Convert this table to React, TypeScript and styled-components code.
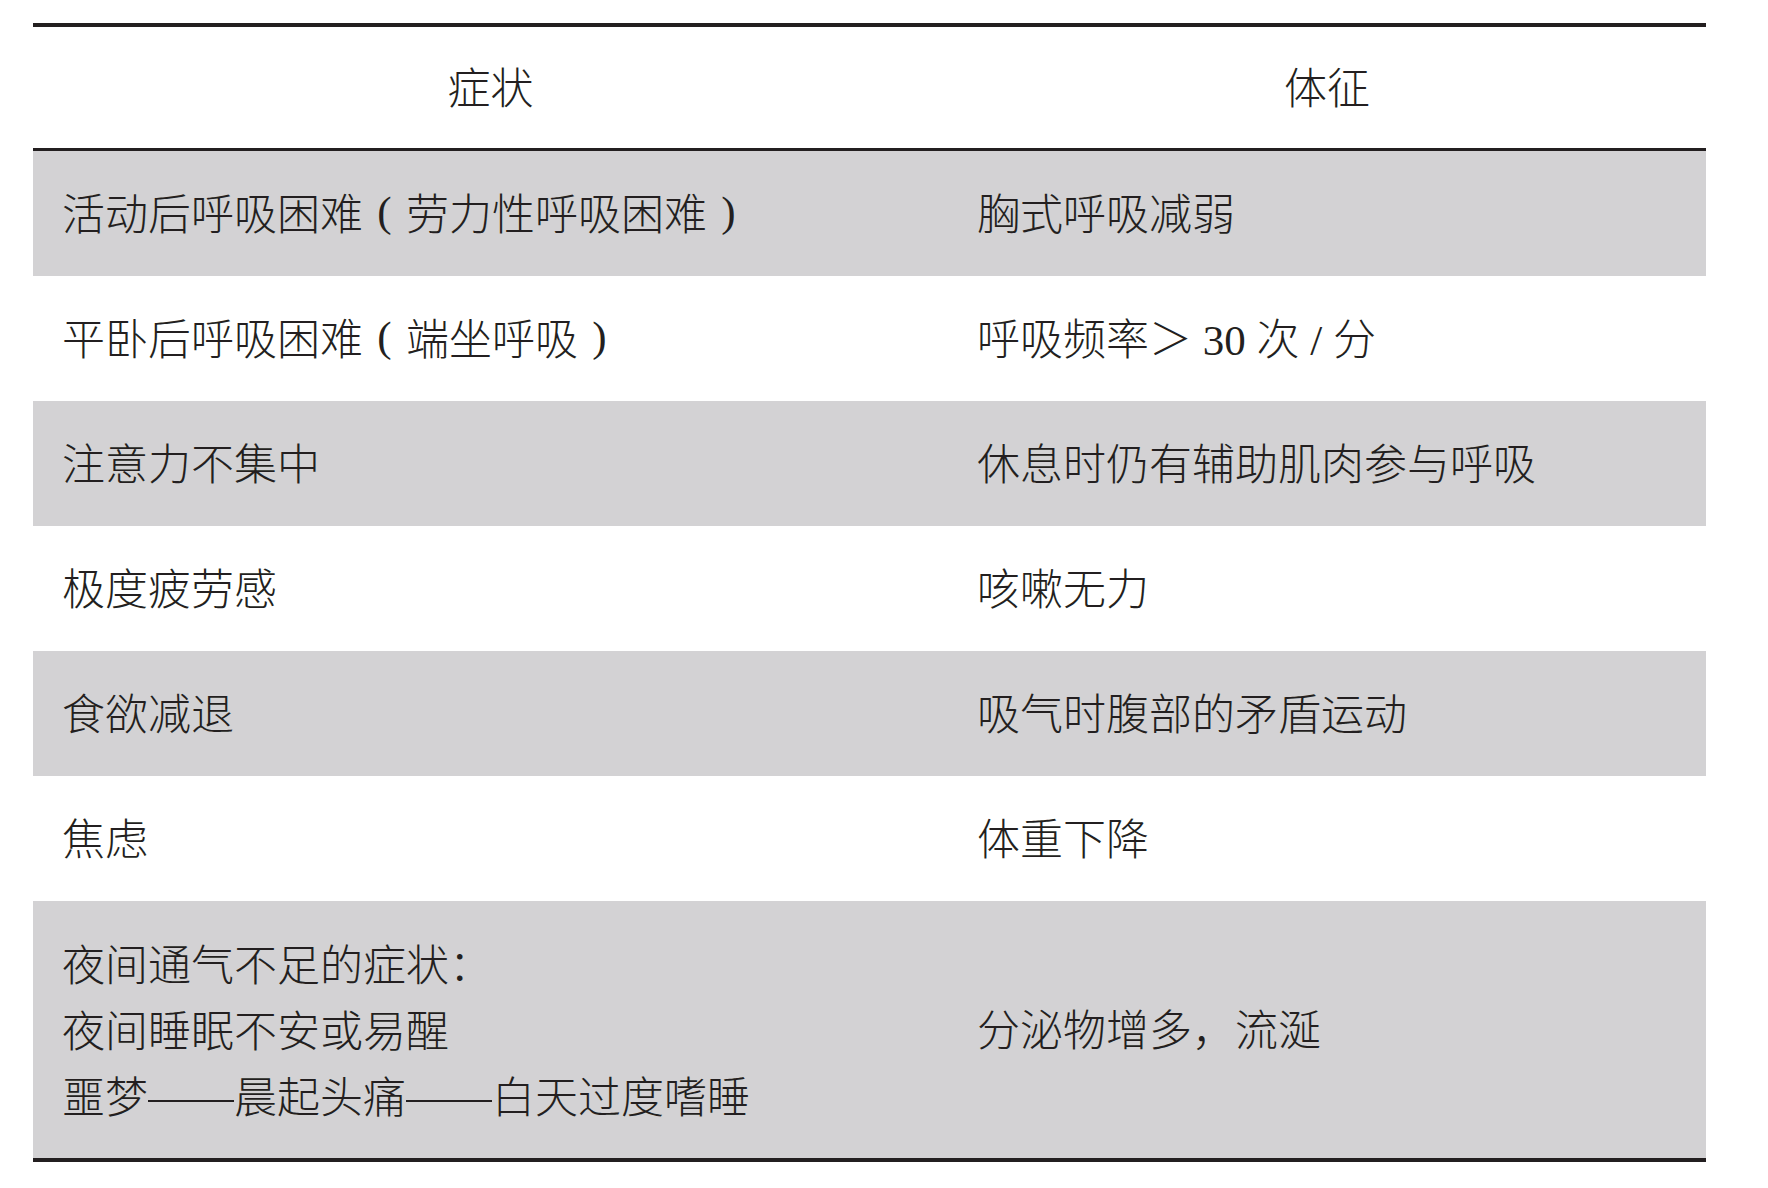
import React from "react";
import styled, { createGlobalStyle } from "styled-components";

const Global = createGlobalStyle`
  html, body { margin: 0; padding: 0; background: #ffffff; }
  body {
    font-family: "Liberation Serif", "Noto Sans CJK SC", serif;
    color: #231f20;
  }
`;

const Table = styled.div`
  margin: 23px 0 0 33px;
  width: 1673px;
  border-top: 4px solid #231f20;
  border-bottom: 4px solid #231f20;
  font-family: "Liberation Serif", "Noto Sans CJK SC", serif;
  font-size: 43px;
  font-weight: 300;
  color: #231f20;
`;

const HeaderRow = styled.div`
  display: grid;
  grid-template-columns: 915px 758px;
  height: 121px;
  border-bottom: 3px solid #231f20;
`;

const HeaderCell = styled.div`
  display: flex;
  align-items: center;
  justify-content: center;
  padding-bottom: 6px;
`;

const Row = styled.div<{ $shaded?: boolean; $tall?: boolean }>`
  display: grid;
  grid-template-columns: 915px 758px;
  height: ${(p) => (p.$tall ? "257px" : "125px")};
  background: ${(p) => (p.$shaded ? "#d3d2d4" : "#ffffff")};
`;

const Cell = styled.div`
  display: flex;
  align-items: center;
  padding-left: 29px;
  padding-bottom: 5px;
  white-space: pre;
`;

const Lines = styled.div`
  display: flex;
  flex-direction: column;
  line-height: 66px;
  padding-top: 12px;
`;

const Paren = styled.span`
  display: inline-block;
  width: 1em;
  text-align: center;
`;

const Dash = styled.span`
  display: inline-block;
  width: 2em;
  height: 2px;
  background: #231f20;
  vertical-align: middle;
  margin-top: -4px;
`;

type RowData = { left: React.ReactNode; right: React.ReactNode };

const rows: RowData[] = [
  {
    left: (
      <>
        活动后呼吸困难<Paren>(</Paren>劳力性呼吸困难<Paren>)</Paren>
      </>
    ),
    right: "胸式呼吸减弱",
  },
  {
    left: (
      <>
        平卧后呼吸困难<Paren>(</Paren>端坐呼吸<Paren>)</Paren>
      </>
    ),
    right: "呼吸频率＞ 30 次 / 分",
  },
  { left: "注意力不集中", right: "休息时仍有辅助肌肉参与呼吸" },
  { left: "极度疲劳感", right: "咳嗽无力" },
  { left: "食欲减退", right: "吸气时腹部的矛盾运动" },
  { left: "焦虑", right: "体重下降" },
];

export default function App() {
  return (
    <>
      <Global />
      <Table>
        <HeaderRow>
          <HeaderCell>症状</HeaderCell>
          <HeaderCell>体征</HeaderCell>
        </HeaderRow>
        {rows.map((r, i) => (
          <Row key={i} $shaded={i % 2 === 0}>
            <Cell>{r.left}</Cell>
            <Cell>{r.right}</Cell>
          </Row>
        ))}
        <Row $shaded $tall>
          <Cell>
            <Lines>
              <span>夜间通气不足的症状：</span>
              <span>夜间睡眠不安或易醒</span>
              <span>
                噩梦<Dash />晨起头痛<Dash />白天过度嗜睡
              </span>
            </Lines>
          </Cell>
          <Cell>分泌物增多，流涎</Cell>
        </Row>
      </Table>
    </>
  );
}
